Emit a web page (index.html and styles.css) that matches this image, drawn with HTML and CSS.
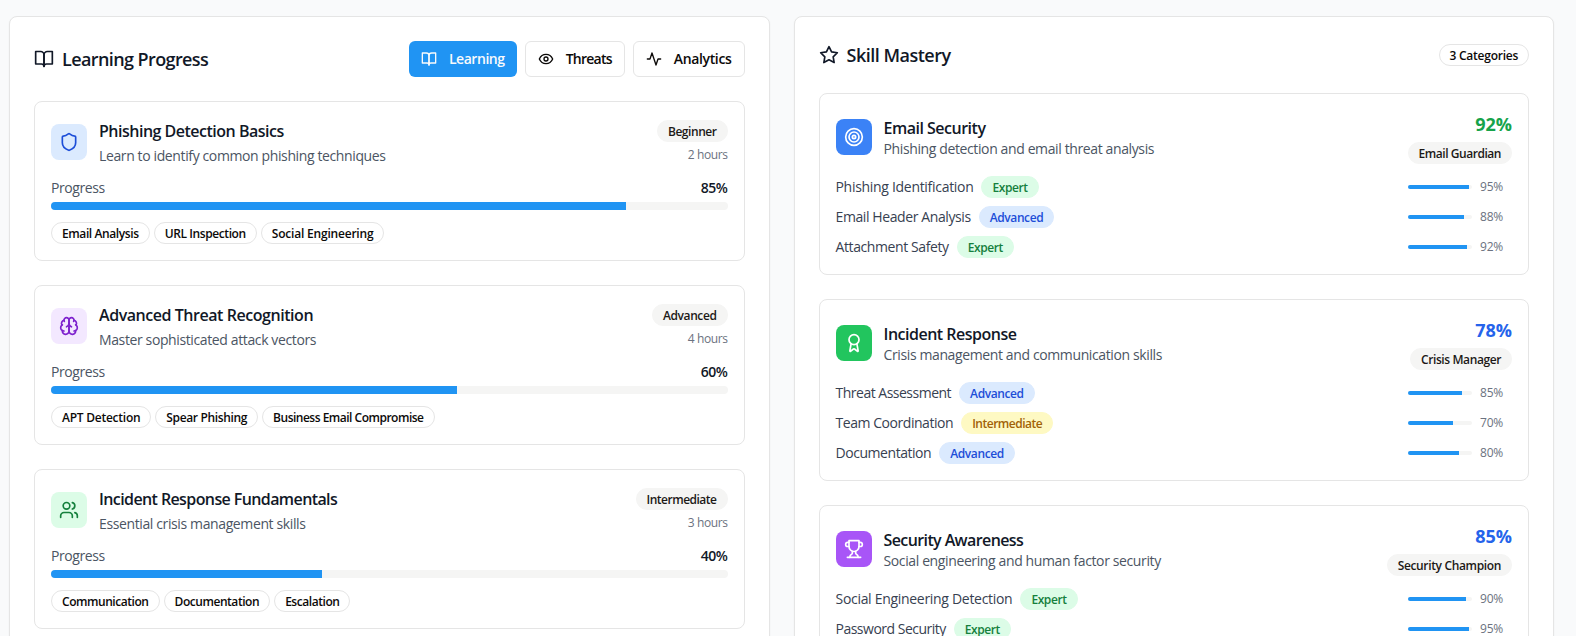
FILE: index.html
```html
<!DOCTYPE html>
<html lang="en">
<head>
<meta charset="utf-8">
<title>Learning Progress</title>
<link rel="stylesheet" href="styles.css">
</head>
<body>
<svg class="defs" aria-hidden="true">
  <symbol id="book" viewBox="0 0 24 24"><path d="M2 3h6a4 4 0 0 1 4 4v14a3 3 0 0 0-3-3H2z"/><path d="M22 3h-6a4 4 0 0 0-4 4v14a3 3 0 0 1 3-3h7z"/></symbol>
  <symbol id="eye" viewBox="0 0 24 24"><path d="M2 12s3-7 10-7 10 7 10 7-3 7-10 7-10-7-10-7Z"/><circle cx="12" cy="12" r="3"/></symbol>
  <symbol id="activity" viewBox="0 0 24 24"><path d="M22 12h-4l-3 9L9 3l-3 9H2"/></symbol>
  <symbol id="shield" viewBox="0 0 24 24"><path d="M20 13c0 5-3.500 7.500-7.660 8.950a1 1 0 0 1-.67-.01C7.500 20.500 4 18 4 13V6a1 1 0 0 1 1-1c2 0 4.500-1.200 6.240-2.720a1.170 1.170 0 0 1 1.520 0C14.510 3.810 17 5 19 5a1 1 0 0 1 1 1z"/></symbol>
  <symbol id="brain" viewBox="0 0 24 24"><path d="M12 5a3 3 0 1 0-5.997.125 4 4 0 0 0-2.526 5.770 4 4 0 0 0 .556 6.588A4 4 0 1 0 12 18Z"/><path d="M12 5a3 3 0 1 1 5.997.125 4 4 0 0 1 2.526 5.770 4 4 0 0 1-.556 6.588A4 4 0 1 1 12 18Z"/><path d="M15 13a4.500 4.500 0 0 1-3-4 4.500 4.500 0 0 1-3 4"/><path d="M17.599 6.500a3 3 0 0 0 .399-1.375"/><path d="M6.003 5.125A3 3 0 0 0 6.401 6.500"/><path d="M3.477 10.896a4 4 0 0 1 .585-.396"/><path d="M19.938 10.500a4 4 0 0 1 .585.396"/><path d="M6 18a4 4 0 0 1-1.967-.516"/><path d="M19.967 17.484A4 4 0 0 1 18 18"/></symbol>
  <symbol id="users" viewBox="0 0 24 24"><path d="M16 21v-2a4 4 0 0 0-4-4H6a4 4 0 0 0-4 4v2"/><circle cx="9" cy="7" r="4"/><path d="M22 21v-2a4 4 0 0 0-3-3.870"/><path d="M16 3.130a4 4 0 0 1 0 7.750"/></symbol>
  <symbol id="star" viewBox="0 0 24 24"><path d="M12 2l3.090 6.260L22 9.270l-5 4.870 1.180 6.880L12 17.770l-6.180 3.250L7 14.140 2 9.270l6.910-1.010L12 2z"/></symbol>
  <symbol id="target" viewBox="0 0 24 24"><circle cx="12" cy="12" r="10"/><circle cx="12" cy="12" r="6"/><circle cx="12" cy="12" r="2"/></symbol>
  <symbol id="award" viewBox="0 0 24 24"><path d="m15.477 12.890 1.515 8.526a.5.5 0 0 1-.81.470l-3.580-2.687a1 1 0 0 0-1.197 0l-3.586 2.686a.5.5 0 0 1-.81-.469l1.514-8.526"/><circle cx="12" cy="8" r="6"/></symbol>
  <symbol id="trophy" viewBox="0 0 24 24"><path d="M6 9H4.500a2.500 2.500 0 0 1 0-5H6"/><path d="M18 9h1.500a2.500 2.500 0 0 0 0-5H18"/><path d="M4 22h16"/><path d="M10 14.660V17c0 .550-.470.980-.970 1.210C7.850 18.750 7 20.240 7 22"/><path d="M14 14.660V17c0 .550.470.980.970 1.210C16.150 18.750 17 20.240 17 22"/><path d="M18 2H6v7a6 6 0 0 0 12 0V2Z"/></symbol>
</svg>

<main class="page">
  <section class="panel">
    <header class="panel-head tall">
      <h2 class="k60"><svg class="icon i20"><use href="#book"/></svg>Learning Progress</h2>
      <nav class="tabs">
        <button class="tab active k45"><svg class="icon i16"><use href="#book"/></svg>Learning</button>
        <button class="tab k75"><svg class="icon i16"><use href="#eye"/></svg>Threats</button>
        <button class="tab k35"><svg class="icon i16"><use href="#activity"/></svg>Analytics</button>
      </nav>
    </header>
    <div class="cards">
      <article class="card">
        <div class="row">
          <span class="tile blue-soft"><svg class="icon i20"><use href="#shield"/></svg></span>
          <div class="info course"><h3 class="k50">Phishing Detection Basics</h3><p>Learn to identify common phishing techniques</p></div>
          <div class="side"><span class="badge muted k45">Beginner</span><span class="hours">2 hours</span></div>
        </div>
        <div class="meter-label"><span>Progress</span><b>85%</b></div>
        <div class="bar"><i style="width:85%"></i></div>
        <div class="chips"><span class="badge k40">Email Analysis</span><span class="badge k40">URL Inspection</span><span class="badge k20">Social Engineering</span></div>
      </article>
      <article class="card">
        <div class="row">
          <span class="tile purple-soft"><svg class="icon i20"><use href="#brain"/></svg></span>
          <div class="info course"><h3 class="k45">Advanced Threat Recognition</h3><p>Master sophisticated attack vectors</p></div>
          <div class="side"><span class="badge muted k40">Advanced</span><span class="hours">4 hours</span></div>
        </div>
        <div class="meter-label"><span>Progress</span><b>60%</b></div>
        <div class="bar"><i style="width:60%"></i></div>
        <div class="chips"><span class="badge k25">APT Detection</span><span class="badge k35">Spear Phishing</span><span class="badge k50">Business Email Compromise</span></div>
      </article>
      <article class="card">
        <div class="row">
          <span class="tile green-soft"><svg class="icon i20"><use href="#users"/></svg></span>
          <div class="info course"><h3 class="k60">Incident Response Fundamentals</h3><p>Essential crisis management skills</p></div>
          <div class="side"><span class="badge muted k50">Intermediate</span><span class="hours">3 hours</span></div>
        </div>
        <div class="meter-label"><span>Progress</span><b>40%</b></div>
        <div class="bar"><i style="width:40%"></i></div>
        <div class="chips"><span class="badge k45">Communication</span><span class="badge k45">Documentation</span><span class="badge k45">Escalation</span></div>
      </article>
    </div>
  </section>

  <section class="panel">
    <header class="panel-head">
      <h2 class="k50"><svg class="icon i20"><use href="#star"/></svg>Skill Mastery</h2>
      <span class="badge k25">3 Categories</span>
    </header>
    <div class="cards">
      <article class="card">
        <div class="row">
          <span class="tile blue"><svg class="icon i20"><use href="#target"/></svg></span>
          <div class="info"><h3 class="k50">Email Security</h3><p>Phishing detection and email threat analysis</p></div>
          <div class="side score"><strong class="high">92%</strong><span class="badge muted k45">Email Guardian</span></div>
        </div>
        <ul class="skills">
          <li><span class="name">Phishing Identification</span><span class="badge expert">Expert</span><span class="bar thin"><i style="width:95%"></i></span><em>95%</em></li>
          <li><span class="name k40">Email Header Analysis</span><span class="badge advanced">Advanced</span><span class="bar thin"><i style="width:88%"></i></span><em>88%</em></li>
          <li><span class="name k40">Attachment Safety</span><span class="badge expert">Expert</span><span class="bar thin"><i style="width:92%"></i></span><em>92%</em></li>
        </ul>
      </article>
      <article class="card">
        <div class="row">
          <span class="tile green"><svg class="icon i20"><use href="#award"/></svg></span>
          <div class="info"><h3 class="k50">Incident Response</h3><p>Crisis management and communication skills</p></div>
          <div class="side score"><strong>78%</strong><span class="badge muted k40">Crisis Manager</span></div>
        </div>
        <ul class="skills">
          <li><span class="name k50">Threat Assessment</span><span class="badge advanced">Advanced</span><span class="bar thin"><i style="width:85%"></i></span><em>85%</em></li>
          <li><span class="name k45">Team Coordination</span><span class="badge intermediate k50">Intermediate</span><span class="bar thin"><i style="width:70%"></i></span><em>70%</em></li>
          <li><span class="name k45">Documentation</span><span class="badge advanced">Advanced</span><span class="bar thin"><i style="width:80%"></i></span><em>80%</em></li>
        </ul>
      </article>
      <article class="card">
        <div class="row">
          <span class="tile purple"><svg class="icon i20"><use href="#trophy"/></svg></span>
          <div class="info"><h3 class="k60">Security Awareness</h3><p>Social engineering and human factor security</p></div>
          <div class="side score"><strong>85%</strong><span class="badge muted k35">Security Champion</span></div>
        </div>
        <ul class="skills">
          <li><span class="name">Social Engineering Detection</span><span class="badge expert">Expert</span><span class="bar thin"><i style="width:90%"></i></span><em>90%</em></li>
          <li><span class="name k50">Password Security</span><span class="badge expert">Expert</span><span class="bar thin"><i style="width:95%"></i></span><em>95%</em></li>
        </ul>
      </article>
    </div>
  </section>
</main>
</body>
</html>
```
FILE: styles.css
```css
* { box-sizing: border-box; margin: 0; padding: 0; }
html, body { height: 100%; overflow: hidden; }
body {
  background: #f9fafb;
  color: #111827;
  font-family: "Open Sans", "Noto Sans", sans-serif;
  font-size: 14px;
  line-height: 20px;
}
.defs { display: none; }
.page {
  display: grid;
  grid-template-columns: 1fr 1fr;
  gap: 24px;
  width: 1554px;
  height: 720px;
  padding: 16px 0 0 9px;
}
.panel {
  background: #fff;
  border: 1px solid #e5e5e5;
  border-radius: 8px;
  padding: 24px;
  box-shadow: 0 1px 2px rgba(0, 0, 0, .05);
}
.panel-head {
  display: flex;
  align-items: center;
  justify-content: space-between;
  height: 28px;
  margin-bottom: 24px;
}
.panel-head.tall { height: 36px; }
h2 {
  display: flex;
  align-items: center;
  gap: 8px;
  font-size: 18px;
  line-height: 28px;
  font-weight: 600;
}
h3 { padding-top: 2px; font-size: 16px; line-height: 22px; font-weight: 600; }

.icon {
  fill: none;
  stroke: currentColor;
  stroke-width: 2;
  stroke-linecap: round;
  stroke-linejoin: round;
  flex: none;
}
.i20 { width: 20px; height: 20px; }
.i16 { width: 16px; height: 16px; }

.tabs { display: flex; gap: 8px; }
.tab {
  display: flex;
  align-items: center;
  gap: 12px;
  height: 36px;
  padding: 0 12px;
  border: 1px solid #e5e5e5;
  border-radius: 6px;
  background: #fff;
  color: #0c0a09;
  font: 600 14px/20px "Open Sans", "Noto Sans", sans-serif;
}
.tab.active { padding: 0 12px; border: 0; background: #2094f3; color: #f8fafc; }

.cards { display: grid; gap: 24px; }
.card {
  background: #fff;
  border: 1px solid #e5e5e5;
  border-radius: 8px;
  padding: 16px;
}
.row { display: flex; align-items: center; gap: 12px; }
.tile {
  display: grid;
  place-items: center;
  width: 36px;
  height: 36px;
  border-radius: 8px;
}
.blue-soft { background: #dbeafe; color: #1d4ed8; }
.purple-soft { background: #f3e8ff; color: #7e22ce; }
.green-soft { background: #dcfce7; color: #15803d; }
.blue { background: #3b82f6; color: #fff; }
.green { background: #22c55e; color: #fff; }
.purple { background: #a855f7; color: #fff; }

.info { flex: 1; }
.info p { color: #4b5563; letter-spacing: -.38px; }
.course p { margin-top: 4px; }
.side { display: flex; flex-direction: column; align-items: flex-end; gap: 4px; }
.hours { font-size: 12px; line-height: 18px; color: #6b7280; letter-spacing: -.4px; }
.score strong { font-size: 18px; line-height: 28px; font-weight: 700; color: #2563eb; }
.score .high { color: #16a34a; }

.meter-label {
  display: flex;
  justify-content: space-between;
  margin: 12px 0 4px;
  color: #4b5563;
  letter-spacing: -.42px;
}
.meter-label b { font-weight: 600; color: #111827; }
.bar { display: block; height: 8px; border-radius: 4px; background: #f5f5f4; overflow: hidden; }
.bar i { display: block; height: 100%; background: #2094f3; }
.bar.thin { width: 64px; height: 4px; margin-left: auto; }

.chips { display: flex; gap: 4px; margin-top: 12px; }
.badge {
  flex: none;
  padding: 3px 10px 1px;
  border: 1px solid #e5e5e5;
  border-radius: 11px;
  font-size: 12px;
  line-height: 16px;
  font-weight: 600;
  color: #0c0a09;
  white-space: nowrap;
}
.muted { background: #f5f5f4; border-color: #f5f5f4; color: #1c1917; }
.expert { background: #dcfce7; border-color: #dcfce7; color: #15803d; letter-spacing: -.42px; }
.advanced { background: #dbeafe; border-color: #dbeafe; color: #1d4ed8; letter-spacing: -.4px; }
.intermediate { background: #fef9c3; border-color: #fef9c3; color: #a16207; }

.skills { display: grid; gap: 8px; margin-top: 12px; list-style: none; }
.skills li { display: flex; align-items: center; gap: 8px; }
.name { color: #374151; letter-spacing: -.3px; }
.skills em { width: 32px; font-style: normal; font-size: 12px; line-height: 16px; color: #6b7280; letter-spacing: -.2px; }

/* tracking steps, in hundredths of a pixel */
.k20 { letter-spacing: -.2px; }
.k25 { letter-spacing: -.25px; }
.k35 { letter-spacing: -.35px; }
.k40 { letter-spacing: -.4px; }
.k45 { letter-spacing: -.45px; }
.k50 { letter-spacing: -.5px; }
.k60 { letter-spacing: -.6px; }
.k75 { letter-spacing: -.75px; }
```
